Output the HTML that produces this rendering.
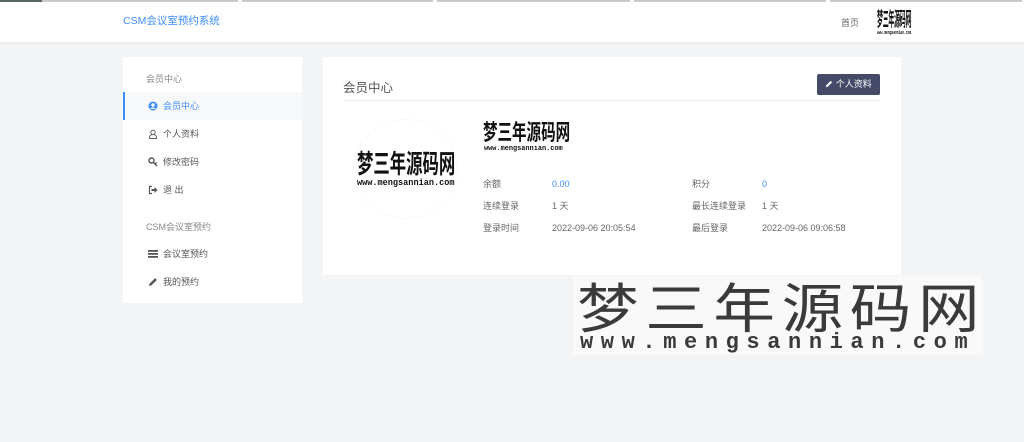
<!DOCTYPE html>
<html><head><meta charset="utf-8"><style>
*{margin:0;padding:0;box-sizing:border-box}
body{width:1024px;height:442px;background:#f3f4f6;font-family:"Liberation Sans","Noto Sans CJK SC",sans-serif;position:relative;overflow:hidden;font-size:9px;color:#555}
.top{position:absolute;left:0;top:0;width:1024px;height:2px;background:#c8cbc9}
.top i{position:absolute;top:0;height:2px;width:4px;background:#fff}
.hdr{position:absolute;left:0;top:0;width:1024px;height:42px;background:#fff;box-shadow:0 1px 4px rgba(0,0,0,.06)}
.brand{position:absolute;left:123px;top:13px;color:#3d8ef7;font-size:10.5px}
.nav{position:absolute;left:841px;top:16px;color:#666;font-size:9px}
.side{position:absolute;left:123px;top:57px;width:179px;height:246px;background:#fff}
.side .t{position:absolute;left:23px;color:#888;font-size:9px}
.side .it{position:absolute;left:0;width:179px;height:28px;line-height:28px;padding-left:40px;color:#555;font-size:9px}
.side .it.act{background:#f7f8fa;border-left:2px solid #3d8ef7;color:#3d8ef7;padding-left:38px}
.ic{position:absolute;left:25px;top:9px;width:10px;height:10px;font-size:9px;line-height:10px;color:#555}
.main{position:absolute;left:323px;top:57px;width:578px;height:218px;background:#fff}
.main h2{position:absolute;left:20px;top:20px;font-size:12.5px;font-weight:normal;color:#555}
.main .ln{position:absolute;left:20px;right:20px;top:43px;height:1px;background:#eee}
.btn{position:absolute;left:494px;top:17px;width:63px;height:21px;background:#454a68;color:#fff;font-size:9px;line-height:21px;text-align:center;border-radius:2px}
.logo{position:absolute;color:#111;font-family:"Noto Sans CJK SC",sans-serif;white-space:nowrap;transform-origin:left top;line-height:1;font-weight:bold}
.url{position:absolute;font-weight:bold;font-family:"Liberation Mono",monospace;color:#111;white-space:nowrap;line-height:1;transform-origin:left top}
.lbl,.val{position:absolute;font-size:9px;color:#666;line-height:12px}
.blue{color:#3d8ef7}
.wm{position:absolute;left:573px;top:276px;width:409px;height:79px;background:#f9f9fa}
.wm .a{position:absolute;left:4px;top:3px;font-size:56px;line-height:56px;letter-spacing:6px;color:#3a3a3a;font-family:"Noto Sans CJK SC",sans-serif;white-space:nowrap;transform:scale(1.1,.95);transform-origin:left top}
.wm .b{position:absolute;left:7px;top:56px;font-size:22px;line-height:22px;font-weight:bold;letter-spacing:7.6px;color:#3a3a3a;font-family:"Liberation Mono",monospace;white-space:nowrap}
</style></head><body>
<div class="hdr"></div>
<div class="top"><i style="left:0;width:42px;background:#5a6662"></i><i style="left:238px"></i><i style="left:433px"></i><i style="left:630px"></i><i style="left:826px"></i><i style="left:1022px"></i></div>
<div class="brand">CSM会议室预约系统</div>
<div class="nav">首页</div>
<div class="logo" style="left:877px;top:8px;font-size:20px;letter-spacing:-1px;transform:scaleX(.3)">梦三年源码网</div>
<div class="url" style="left:877px;top:31px;font-size:5px;transform:scaleX(.6)">www.mengsannian.com</div>

<div class="side">
<div class="t" style="top:15px">会员中心</div>
<div class="it act" style="top:35px"><span class="ic" style="left:23px"><svg width="10" height="10" viewBox="0 0 10 10"><circle cx="5" cy="5" r="4.5" fill="#3d8ef7"/><circle cx="5" cy="4" r="1.7" fill="#fff"/><path d="M2.2 8a3.2 3 0 0 1 5.6 0" fill="#fff"/></svg></span>会员中心</div>
<div class="it" style="top:63px"><span class="ic"><svg width="10" height="10" viewBox="0 0 10 10" fill="none" stroke="#666" stroke-width="1"><circle cx="5" cy="3.3" r="2.2"/><path d="M1.5 9.5v-1.5a3.5 2.5 0 0 1 7 0v1.5z"/></svg></span>个人资料</div>
<div class="it" style="top:91px"><span class="ic"><svg width="10" height="10" viewBox="0 0 10 10"><circle cx="3.5" cy="3.5" r="2.5" fill="none" stroke="#555" stroke-width="1.4"/><path d="M5 5l4 4M7 7l1.5-1.5" stroke="#555" stroke-width="1.4"/></svg></span>修改密码</div>
<div class="it" style="top:119px"><span class="ic"><svg width="10" height="10" viewBox="0 0 10 10"><path d="M4 1.5H1.5v7H4" fill="none" stroke="#555" stroke-width="1.2"/><path d="M3.5 4h3V2l3 3-3 3V6h-3z" fill="#555"/></svg></span>退 出</div>
<div class="t" style="top:163px">CSM会议室预约</div>
<div class="it" style="top:183px"><span class="ic"><svg width="10" height="10" viewBox="0 0 10 10" fill="#555"><rect x="0" y="1" width="10" height="1.8"/><rect x="0" y="4" width="10" height="1.8"/><rect x="0" y="7" width="10" height="1.8"/></svg></span>会议室预约</div>
<div class="it" style="top:211px"><span class="ic"><svg width="10" height="10" viewBox="0 0 10 10"><path d="M1 9l.6-2.4 5.5-5.5 1.8 1.8-5.5 5.5z" fill="#555"/></svg></span>我的预约</div>
</div>

<div class="main">
<h2>会员中心</h2>
<div class="ln"></div>
<div style="position:absolute;left:30px;top:62px;width:105px;height:100px;border-radius:50%;border:1px solid #f9f9f9"></div>
<div class="btn"><svg width="8" height="8" viewBox="0 0 10 10" style="vertical-align:-1px"><path d="M1 9l.6-2.4 5.5-5.5 1.8 1.8-5.5 5.5z" fill="#fff"/></svg> 个人资料</div>
<div class="logo" style="left:34px;top:93px;font-size:26px;transform:scaleX(.63)">梦三年源码网</div>
<div class="url" style="left:34px;top:122px;font-size:9px;transform:scaleX(.95)">www.mengsannian.com</div>
<div class="logo" style="left:160px;top:63px;font-size:22px;transform:scaleX(.66)">梦三年源码网</div>
<div class="url" style="left:161px;top:89px;font-size:7.5px;transform:scaleX(.92)">www.mengsannian.com</div>
<div class="lbl" style="left:160px;top:121px">余额</div><div class="val blue" style="left:229px;top:121px">0.00</div>
<div class="lbl" style="left:369px;top:121px">积分</div><div class="val blue" style="left:439px;top:121px">0</div>
<div class="lbl" style="left:160px;top:143px">连续登录</div><div class="val" style="left:229px;top:143px">1 天</div>
<div class="lbl" style="left:369px;top:143px">最长连续登录</div><div class="val" style="left:439px;top:143px">1 天</div>
<div class="lbl" style="left:160px;top:165px">登录时间</div><div class="val" style="left:229px;top:165px">2022-09-06 20:05:54</div>
<div class="lbl" style="left:369px;top:165px">最后登录</div><div class="val" style="left:439px;top:165px">2022-09-06 09:06:58</div>
</div>

<div class="wm"><div class="a">梦三年源码网</div><div class="b">www.mengsannian.com</div></div>
</body></html>
